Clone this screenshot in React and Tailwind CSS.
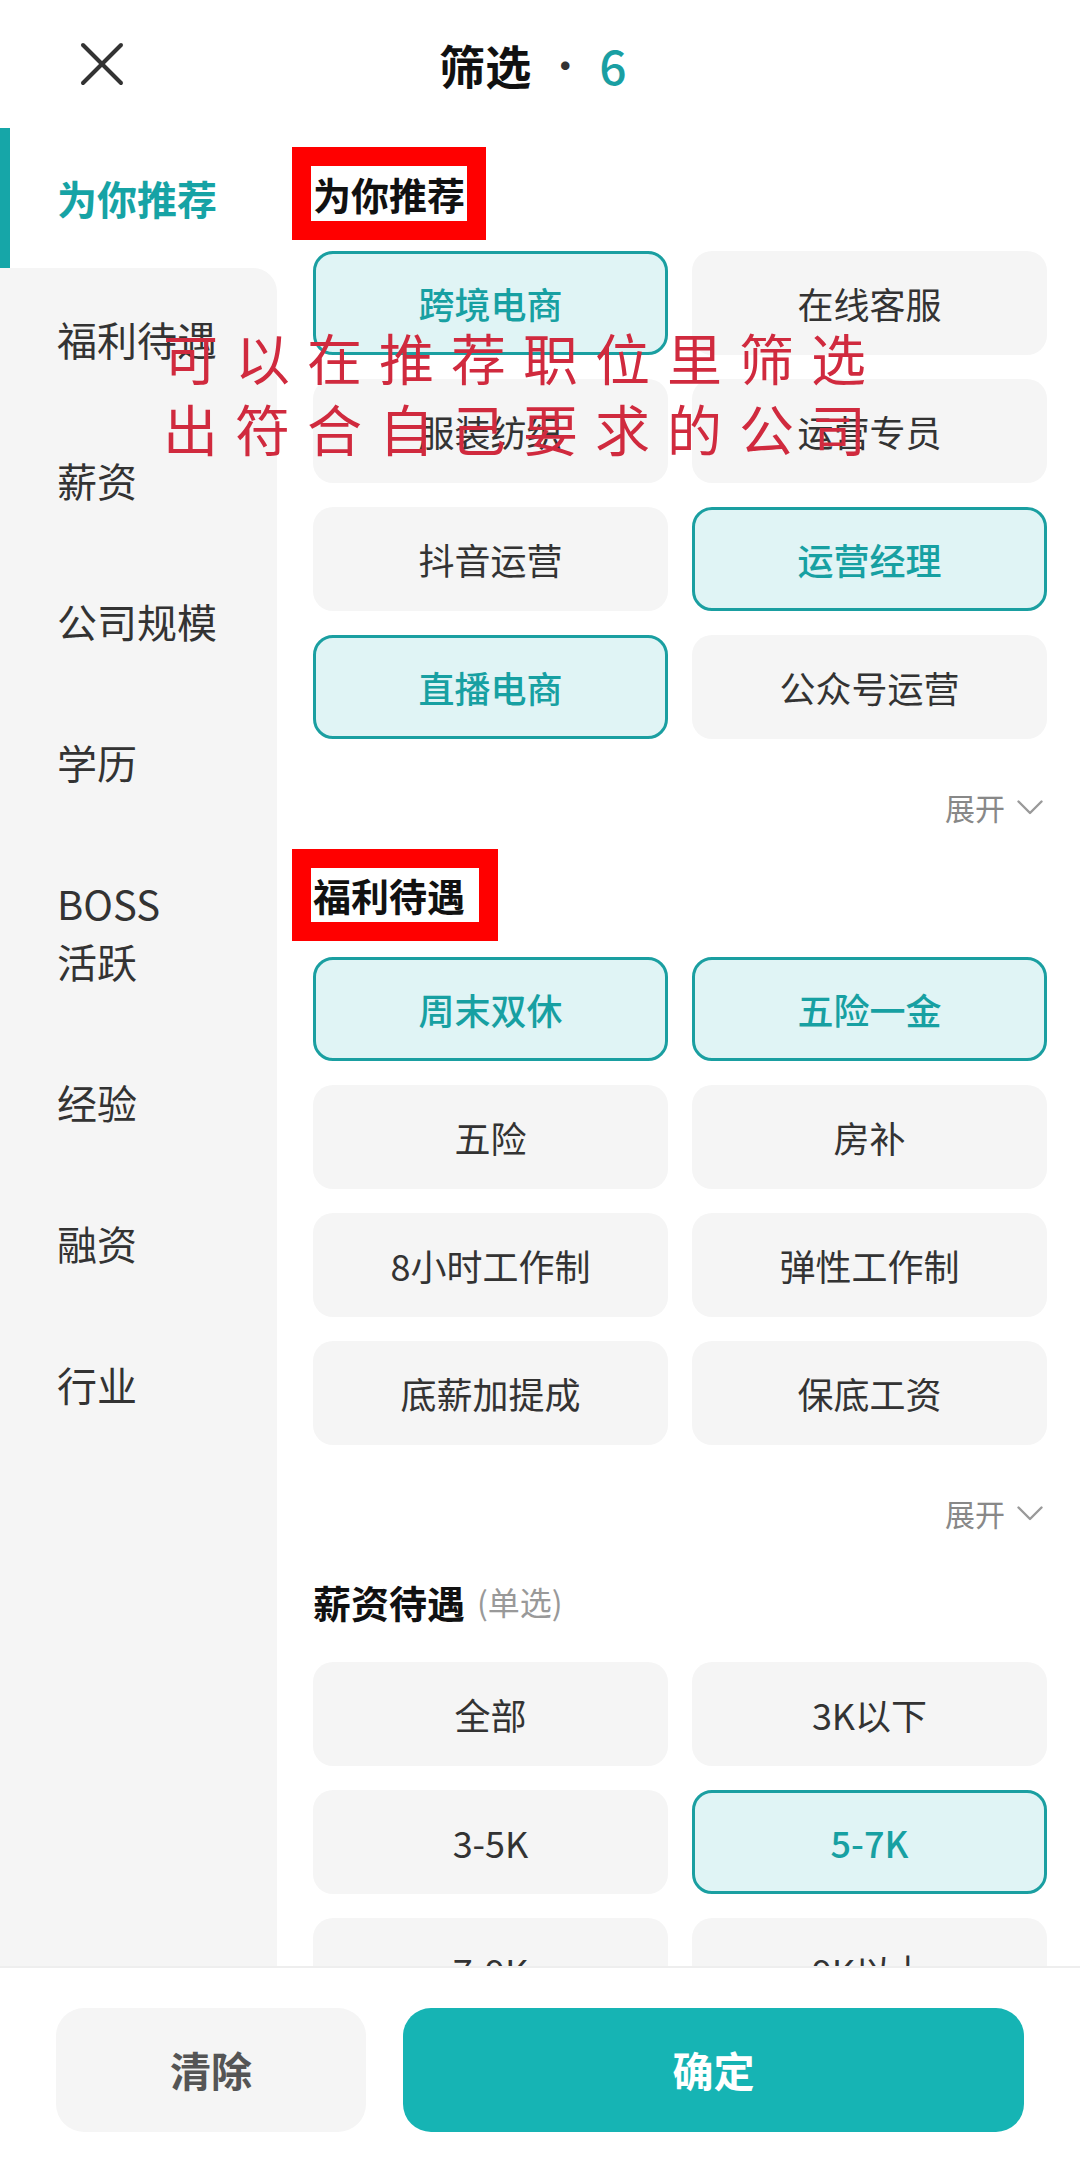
import React from "react";

const Chip = ({ label, selected }) => (
  <div
    className={
      selected
        ? "h-[104px] rounded-[20px] bg-[#e0f4f5] border-[3px] border-[#1a9fa1] flex items-center justify-center text-[36px] font-medium text-[#17a0a2]"
        : "h-[104px] rounded-[20px] bg-[#f5f5f5] flex items-center justify-center text-[36px] text-[#333333]"
    }
  >
    {label}
  </div>
);

const Grid = ({ items, className }) => (
  <div className={"grid grid-cols-2 gap-x-[24px] gap-y-[24px] " + className}>
    {items.map(([l, s]) => (
      <Chip key={l} label={l} selected={s} />
    ))}
  </div>
);

const Expand = ({ className }) => (
  <div className={"h-[44px] flex items-center justify-end gap-[12px] pr-[4px] " + className}>
    <span className="text-[30px] leading-[44px] text-[#888888]">展开</span>
    <svg width="26" height="15" viewBox="0 0 26 15" fill="none">
      <polyline points="1.5,1.5 13,13 24.5,1.5" stroke="#9a9a9a" strokeWidth="2.4" strokeLinecap="round" strokeLinejoin="round" />
    </svg>
  </div>
);

const SideItem = ({ children, h = "h-[141px]" }) => (
  <div className={h + " flex items-center pl-[57px] text-[40px] leading-[58px] text-[#333333]"}>
    <div>{children}</div>
  </div>
);

export default function App() {
  return (
    <div className="relative w-[1080px] h-[2175px] bg-white flex flex-col overflow-hidden font-['Noto_Sans_CJK_SC','Noto_Sans',sans-serif]">
      {/* Header */}
      <div className="h-[128px] shrink-0 grid grid-cols-[1fr_auto_1fr] items-center">
        <div className="pl-[80px] flex items-center">
          <svg width="44" height="44" viewBox="0 0 44 44" fill="none">
            <line x1="3" y1="3" x2="41" y2="41" stroke="#333333" strokeWidth="4" strokeLinecap="round" />
            <line x1="41" y1="3" x2="3" y2="41" stroke="#333333" strokeWidth="4" strokeLinecap="round" />
          </svg>
        </div>
        <div className="flex items-center pr-[14px]">
          <span className="text-[46px] font-bold text-[#111111]">筛选</span>
          <span className="text-[40px] text-[#333333] mx-[14px]">·</span>
          <span className="text-[48px] font-medium text-[#1a9fa3]">6</span>
        </div>
        <div />
      </div>

      {/* Body */}
      <div className="flex-1 min-h-0 flex overflow-hidden">
        {/* Sidebar */}
        <div className="w-[277px] shrink-0 flex flex-col">
          <div className="h-[140px] shrink-0 flex items-center border-l-[10px] border-[#16a6a8] pl-[47px] bg-white">
            <span className="text-[40px] font-bold text-[#16a3a5]">为你推荐</span>
          </div>
          <div className="flex-1 bg-[#f5f5f5] rounded-tr-[24px] flex flex-col">
            <SideItem>福利待遇</SideItem>
            <SideItem>薪资</SideItem>
            <SideItem>公司规模</SideItem>
            <SideItem>学历</SideItem>
            <SideItem h="h-[199px]">
              BOSS
              <br />
              活跃
            </SideItem>
            <SideItem>经验</SideItem>
            <SideItem>融资</SideItem>
            <SideItem>行业</SideItem>
          </div>
        </div>

        {/* Content */}
        <div className="flex-1 pl-[36px] pr-[33px] pt-[19px] flex flex-col">
          <div className="-ml-[21px] self-start border-[19px] border-[#ff0000] bg-white px-[2px]">
            <div className="text-[38px] leading-[55px] font-bold text-[#111111]">为你推荐</div>
          </div>
          <Grid
            className="mt-[11px]"
            items={[
              ["跨境电商", true],
              ["在线客服", false],
              ["服装纺织", false],
              ["运营专员", false],
              ["抖音运营", false],
              ["运营经理", true],
              ["直播电商", true],
              ["公众号运营", false],
            ]}
          />
          <Expand className="mt-[46px]" />

          <div className="mt-[20px] -ml-[21px] self-start border-[19px] border-[#ff0000] bg-white pl-[2px] pr-[14px]">
            <div className="text-[38px] leading-[54px] font-bold text-[#111111]">福利待遇</div>
          </div>
          <Grid
            className="mt-[16px]"
            items={[
              ["周末双休", true],
              ["五险一金", true],
              ["五险", false],
              ["房补", false],
              ["8小时工作制", false],
              ["弹性工作制", false],
              ["底薪加提成", false],
              ["保底工资", false],
            ]}
          />
          <Expand className="mt-[46px]" />

          <div className="mt-[39px] flex items-center h-[54px]">
            <span className="text-[38px] font-bold text-[#111111]">薪资待遇</span>
            <span className="ml-[12px] text-[32px] text-[#999999]">(单选)</span>
          </div>
          <Grid
            className="mt-[34px]"
            items={[
              ["全部", false],
              ["3K以下", false],
              ["3-5K", false],
              ["5-7K", true],
              ["7-9K", false],
              ["9K以上", false],
            ]}
          />
        </div>
      </div>

      {/* Footer */}
      <div className="h-[209px] shrink-0 border-t-2 border-[#eeeeee] bg-white pt-[40px] px-[56px] flex gap-[37px]">
        <div className="w-[310px] h-[124px] rounded-[28px] bg-[#f5f5f5] flex items-center justify-center text-[41px] font-bold text-[#555555]">
          清除
        </div>
        <div className="flex-1 h-[124px] rounded-[28px] bg-[#16b4b4] flex items-center justify-center text-[41px] font-bold text-white">
          确定
        </div>
      </div>

      {/* Red annotation text overlay */}
      <div className="absolute left-[163px] top-[321px] z-10 text-[55px] leading-[71px] tracking-[17px] text-[#d02a3e] whitespace-nowrap pointer-events-none">
        <div>可以在推荐职位里筛选</div>
        <div>出符合自己要求的公司</div>
      </div>
    </div>
  );
}
